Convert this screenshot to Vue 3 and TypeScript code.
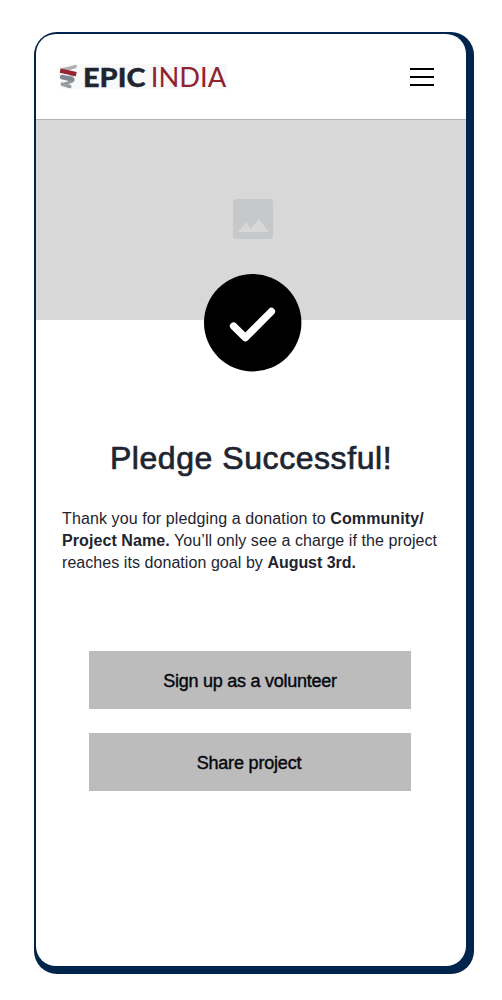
<script setup lang="ts">
const actions: { label: string; spacing: string }[] = [
  { label: 'Sign up as a volunteer', spacing: 'volunteer' },
  { label: 'Share project', spacing: 'share' },
]
</script>

<template>
  <main class="phone">
    <div class="screen">
      <header class="header">
        <svg class="logo" width="170" height="30" viewBox="58 62 170 30" role="img" aria-label="EPIC INDIA">
          <rect x="60" y="64" width="167" height="25" fill="#f9f9f9" />
          <g fill="none" stroke-linecap="round">
            <path d="M62 69.7 Q69 68.8 75.2 66.6" stroke="#aeb0b4" stroke-width="3.4" />
            <path d="M65 77 Q70 76.8 75.4 75" stroke="#b1b4b8" stroke-width="2" />
            <path d="M62 77 L72.3 79.6" stroke="#7d8893" stroke-width="4.6" />
            <path d="M64 84 L72 81.4" stroke="#909499" stroke-width="2.6" />
            <path d="M62.4 84.2 L69.8 86.4" stroke="#999b9f" stroke-width="3.6" />
            <path d="M60.2 70.6 L76.2 74.2" stroke="#962431" stroke-width="4.4" stroke-linecap="butt" />
          </g>
          <text class="epic" x="83" y="87" textLength="62.5" lengthAdjust="spacingAndGlyphs">EPIC</text>
          <text class="india" x="150.8" y="87" textLength="75.4" lengthAdjust="spacingAndGlyphs">INDIA</text>
        </svg>
        <button class="menu" aria-label="Menu"><i /><i /><i /></button>
      </header>

      <section class="hero">
        <svg class="picture" width="40" height="40" viewBox="0 0 40 40">
          <rect width="40" height="40" rx="3.5" fill="#c7c8ca" />
          <path d="M5 33 L13 23.3 L18 29.5 L26 20 L35.5 33 Z" fill="#d8d8d8" />
        </svg>
        <svg class="check" width="98" height="98" viewBox="0 0 98 98">
          <circle cx="48.7" cy="48.7" r="48.7" fill="#000" />
          <path d="M29.6 52.1 L41.3 63.6 L67.4 37.5" fill="none" stroke="#fff" stroke-width="7.4" stroke-linecap="round" stroke-linejoin="round" />
        </svg>
      </section>

      <h1 class="title">Pledge Successful!</h1>

      <p class="message">
        <span class="line first">Thank you for pledging a donation to <b>Community/</b></span>
        <span class="line second"><b>Project Name.</b> You’ll only see a charge if the project</span>
        <span class="line third">reaches its donation goal by <b>August 3rd.</b></span>
      </p>

      <div class="actions">
        <button v-for="action in actions" :key="action.label" class="action" :class="action.spacing">
          {{ action.label }}
        </button>
      </div>
    </div>
  </main>
</template>

<style>
body {
  background: #fff;
}
</style>

<style scoped>
.phone {
  box-sizing: border-box;
  width: 440px;
  height: 942px;
  margin: 32px 0 0 34px;
  padding: 2px 8px 8px 2px;
  border-radius: 23px;
  background: #00254c;
  font-family: "Liberation Sans", Arial, sans-serif;
  color: #1e2430;
}
.screen {
  height: 932px;
  border-radius: 20px;
  background: #fff;
  overflow: hidden;
}
.header {
  box-sizing: border-box;
  height: 86px;
  padding: 0 32px 0 22px;
  border-bottom: 1px solid #b4b4b4;
  display: flex;
  align-items: center;
  justify-content: space-between;
}
.logo {
  display: block;
}
.epic,
.india {
  font-family: Lato, sans-serif;
  font-size: 26px;
}
.epic {
  font-weight: 900;
  fill: #1e2531;
  stroke: #1e2531;
  stroke-width: 0.3px;
}
.india {
  font-weight: 400;
  fill: #8e2431;
}
.menu {
  display: flex;
  flex-direction: column;
  gap: 6px;
  width: 24px;
  padding: 0;
  border: 0;
  background: none;
}
.menu i {
  height: 2px;
  background: #000;
}
.hero {
  position: relative;
  height: 200px;
  background: #d8d8d8;
}
.picture {
  display: block;
  margin-left: 197px;
  transform: translateY(79px);
}
.check {
  position: absolute;
  left: 168px;
  top: 154px;
}
.title {
  margin: 120px 0 0;
  line-height: 36px;
  font-size: 32px;
  font-weight: 400;
  text-align: center;
  letter-spacing: 0.56px;
  -webkit-text-stroke: 0.7px currentColor;
}
.message {
  margin: 32px 0 0 26px;
  font-size: 16px;
  line-height: 22px;
}
.line {
  display: block;
  white-space: nowrap;
}
.first {
  letter-spacing: 0.11px;
}
.second {
  letter-spacing: 0.08px;
}
.third {
  letter-spacing: 0.06px;
}
.third b {
  letter-spacing: -0.05px;
}
.actions {
  display: flex;
  flex-direction: column;
  gap: 24px;
  margin: 77px 55px 0 53px;
}
.action {
  height: 58px;
  padding: 2px 0 0;
  border: 0;
  background: #bcbcbc;
  color: #05070c;
  font: 18px "Liberation Sans", Arial, sans-serif;
  -webkit-text-stroke: 0.4px currentColor;
}
.volunteer {
  letter-spacing: -0.25px;
}
.share {
  letter-spacing: -0.18px;
  padding-right: 2px;
}
</style>
